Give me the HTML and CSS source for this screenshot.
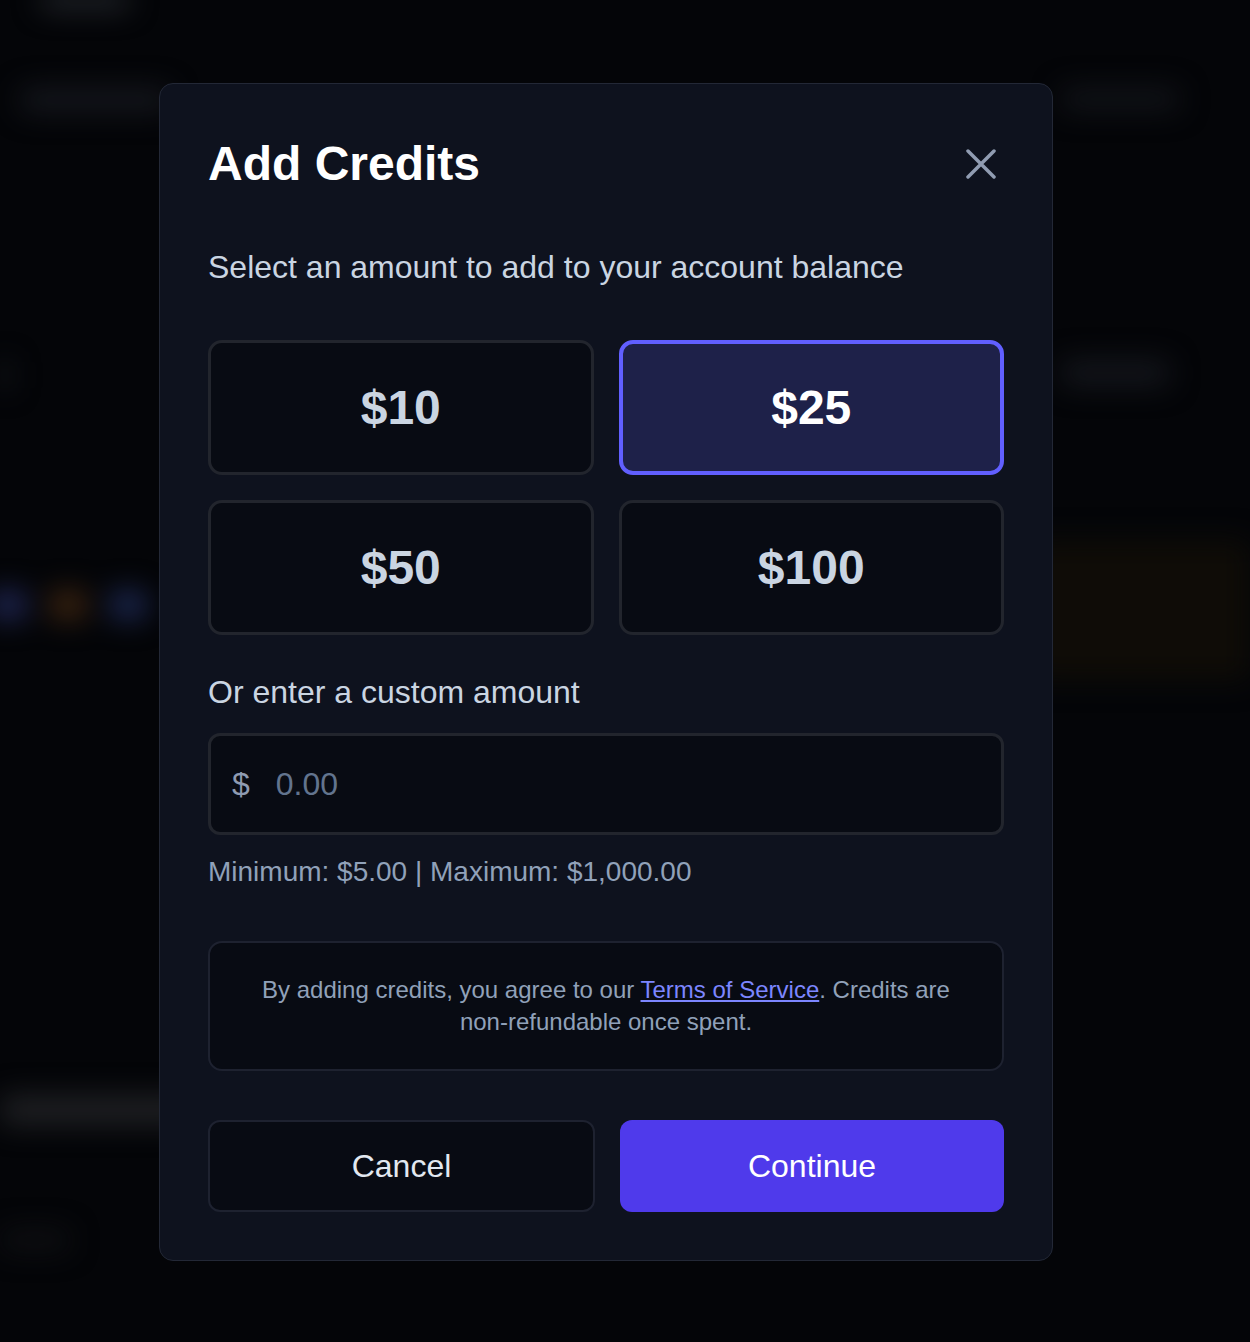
FILE: index.html
```html
<!DOCTYPE html>
<html lang="en">
<head>
<meta charset="utf-8">
<title>Add Credits</title>
<link rel="stylesheet" href="styles.css">
</head>
<body>
<div class="page">
  <div class="page-top">
    <div class="blob blob-logo"></div>
  </div>
  <div class="page-nav">
    <div class="blob blob-nav"></div>
    <div class="spacer"></div>
    <div class="blob blob-nav-r"></div>
  </div>
  <div class="page-row">
    <div class="blob blob-side"></div>
    <div class="spacer"></div>
    <div class="blob blob-right"></div>
  </div>
  <div class="page-row2">
    <div class="dots">
      <span class="dot d1"></span><span class="dot d2"></span><span class="dot d3"></span>
    </div>
    <div class="spacer"></div>
    <div class="blob blob-glow"></div>
  </div>
  <div class="page-row3">
    <div class="blob blob-bar"></div>
  </div>
  <div class="page-row4">
    <div class="blob blob-small"></div>
  </div>
</div>

<div class="overlay">
  <div class="modal">
    <div class="modal-head">
      <h2 class="title">Add Credits</h2>
      <button class="close" aria-label="Close">
        <svg width="30" height="30" viewBox="0 0 30 30"><path d="M2 2 L28 28 M28 2 L2 28" stroke="#909cb2" stroke-width="3.5" stroke-linecap="round" fill="none"/></svg>
      </button>
    </div>
    <p class="subtitle">Select an amount to add to your account balance</p>
    <div class="amounts">
      <button class="amount">$10</button>
      <button class="amount selected">$25</button>
      <button class="amount">$50</button>
      <button class="amount">$100</button>
    </div>
    <label class="custom-label">Or enter a custom amount</label>
    <div class="input">
      <span class="currency">$</span>
      <span class="placeholder">0.00</span>
    </div>
    <p class="limits">Minimum: $5.00 | Maximum: $1,000.00</p>
    <div class="terms">
      By adding credits, you agree to our <a href="#" class="link">Terms of Service</a>. Credits are<br>non-refundable once spent.
    </div>
    <div class="actions">
      <button class="btn btn-cancel">Cancel</button>
      <button class="btn btn-continue">Continue</button>
    </div>
  </div>
</div>
</body>
</html>
```
FILE: styles.css
```css
* { box-sizing: border-box; }
html, body { margin: 0; padding: 0; }
body {
  width: 1250px;
  height: 1342px;
  background: #040508;
  font-family: "Liberation Sans", Arial, sans-serif;
  overflow: hidden;
  position: relative;
}

/* blurred page behind */
.page {
  filter: blur(14px);
  display: flex;
  flex-direction: column;
}
.spacer { flex: 1; }
.blob { border-radius: 10px; }
.page-top { height: 60px; padding-left: 40px; display: flex; align-items: flex-start; }
.blob-logo { width: 90px; height: 14px; background: #2a2d33; margin-top: -6px; }
.page-nav { display: flex; height: 60px; padding: 28px 70px 0 20px; }
.blob-nav { width: 150px; height: 24px; background: #15171d; }
.blob-nav-r { width: 120px; height: 22px; background: #121419; }
.page-row { display: flex; height: 420px; padding: 240px 80px 0 0; }
.blob-side { width: 10px; height: 30px; background: #16181f; }
.blob-right { width: 110px; height: 26px; background: #14161c; }
.page-row2 { display: flex; height: 200px; }
.dots { display: flex; gap: 20px; padding-top: 50px; margin-left: -12px; }
.dot { width: 40px; height: 30px; border-radius: 14px; display: block; }
.d1 { background: #202654; }
.d2 { background: #3d2410; }
.d3 { background: #1c2750; }
.blob-glow { width: 220px; height: 140px; background: #0f0c07; margin-top: 0; }
.page-row3 { height: 400px; padding-top: 355px; }
.blob-bar { width: 190px; height: 30px; background: #1f2023; }
.page-row4 { height: 160px; padding-top: 90px; }
.blob-small { width: 70px; height: 20px; background: #0f1013; }

/* overlay + modal */
.overlay {
  position: absolute;
  inset: 0;
  display: flex;
  align-items: flex-start;
  padding: 83px 0 0 159px;
}
.modal {
  width: 894px;
  background: #0e121e;
  border: 1px solid #232836;
  border-radius: 14px;
  padding: 51px 48px 48px;
  display: flex;
  flex-direction: column;
}
.modal-head {
  display: flex;
  align-items: center;
  justify-content: space-between;
}
.title {
  margin: 0;
  font-size: 48px;
  line-height: 58px;
  font-weight: 700;
  color: #ffffff;
}
.close {
  width: 30px;
  height: 30px;
  background: none;
  border: 0;
  padding: 0;
  display: flex;
  align-items: center;
  justify-content: center;
  cursor: pointer;
  margin-right: 8px;
}
.subtitle {
  margin: 54px 0 0;
  font-size: 32px;
  line-height: 40px;
  color: #cad5e2;
}
.amounts {
  margin-top: 53px;
  display: grid;
  grid-template-columns: 1fr 1fr;
  grid-auto-rows: 135px;
  column-gap: 25px;
  row-gap: 25px;
}
.amount {
  font-family: "Liberation Sans", Arial, sans-serif;
  font-size: 48px;
  font-weight: 700;
  color: #cad5e2;
  background: #080b13;
  border: 3px solid #22252d;
  border-radius: 14px;
  cursor: pointer;
}
.amount.selected {
  background: #1e2149;
  border: 4px solid #615fff;
  color: #ffffff;
}
.custom-label {
  margin-top: 37px;
  font-size: 32px;
  line-height: 40px;
  color: #cad5e2;
}
.input {
  margin-top: 21px;
  height: 102px;
  border: 3px solid #22252d;
  border-radius: 12px;
  background: #080b13;
  display: flex;
  align-items: center;
  padding-left: 21px;
  gap: 26px;
  font-size: 32px;
}
.currency { color: #8e9bb2; }
.placeholder { color: #62748e; }
.limits {
  margin: 19px 0 0;
  font-size: 28px;
  line-height: 36px;
  color: #90a1b9;
}
.terms {
  margin-top: 51px;
  border: 2px solid #1e2230;
  border-radius: 14px;
  background: #080b13;
  padding: 31px 20px;
  text-align: center;
  font-size: 24px;
  line-height: 32px;
  color: #90a1b9;
}
.link {
  color: #7c86ff;
  text-decoration: underline;
}
.actions {
  margin-top: 49px;
  display: grid;
  grid-template-columns: 387px 1fr;
  column-gap: 25px;
}
.btn {
  height: 92px;
  font-family: "Liberation Sans", Arial, sans-serif;
  font-size: 32px;
  border-radius: 12px;
  cursor: pointer;
}
.btn-cancel {
  background: #080b13;
  border: 2px solid #1e2230;
  color: #e2e8f0;
}
.btn-continue {
  background: #4f3aeb;
  border: 0;
  color: #ffffff;
}
```
